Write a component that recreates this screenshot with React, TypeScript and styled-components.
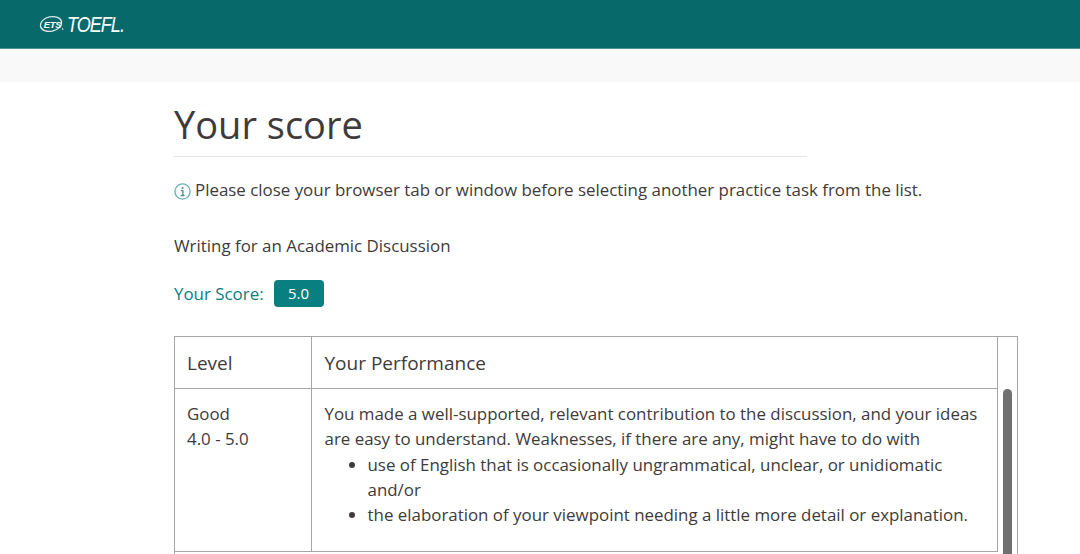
import styled, { createGlobalStyle } from "styled-components";

const GlobalStyle = createGlobalStyle`
  html, body {
    margin: 0;
    background: #fff;
    overflow: hidden;
  }
  body {
    font-family: "Open Sans", "Liberation Sans", sans-serif;
    color: #403b3b;
  }
`;

const Page = styled.div`
  height: 554px;
  overflow: hidden;
`;

const Header = styled.header`
  height: 48px;
  box-sizing: content-box;
  background: #08696b;
  border-bottom: 1px solid #4d9496;
  display: flex;
  align-items: center;
  padding-left: 39px;
  gap: 3px;
`;

const Wordmark = styled.span`
  font-family: "Liberation Sans", sans-serif;
  font-style: italic;
  font-size: 22px;
  letter-spacing: -1.2px;
  color: #fff;
  transform: scaleX(0.82);
  transform-origin: left center;
  position: relative;
  top: 0.5px;
`;

const Band = styled.div`
  height: 33px;
  background: #f9f9f9;
`;

const Main = styled.main`
  padding: 0 62px 0 174px;
`;

const Title = styled.h1`
  margin: 0;
  width: 633px;
  height: 75px;
  box-sizing: border-box;
  padding-top: 15px;
  border-bottom: 1px solid #e5e5e5;
  font-size: 38px;
  line-height: 55px;
  font-weight: 400;
  color: #403b3b;
`;

const Notice = styled.p`
  margin: 21px 0 0;
  display: flex;
  align-items: center;
  gap: 4px;
  font-size: 16.9px;
  line-height: 23px;
`;

const InfoSvg = styled.svg`
  width: 17px;
  height: 17px;
  margin-top: 4px;
  flex: none;
`;

const TaskName = styled.p`
  margin: 33px 0 0;
  font-size: 16.9px;
  line-height: 23px;
`;

const ScoreRow = styled.div`
  margin-top: 23px;
  display: flex;
  align-items: center;
  gap: 10px;
  font-size: 16.9px;
  line-height: 27px;
  color: #0a7f82;
`;

const ScoreBadge = styled.span`
  width: 50px;
  height: 27px;
  border-radius: 4px;
  background: #0a7f82;
  color: #fff;
  font-size: 15px;
  text-align: center;
`;

const TableFrame = styled.div`
  position: relative;
  margin-top: 29px;
  width: 844px;
  height: 300px;
  box-sizing: border-box;
  border: 1px solid #a6a6a6;
  border-bottom: 0;
`;

const Scrollbar = styled.div`
  position: absolute;
  top: 52px;
  right: 5px;
  width: 9px;
  height: 240px;
  border-radius: 5px;
  background: #707070;
`;

const Table = styled.table`
  border-collapse: collapse;
  table-layout: fixed;
  width: 822px;
`;

const HeadCell = styled.th<{ $width: number }>`
  width: ${(p) => p.$width}px;
  height: 51px;
  box-sizing: border-box;
  padding: 1px 13px 0;
  border-right: 1px solid #a6a6a6;
  border-bottom: 1px solid #a6a6a6;
  font-size: 19px;
  font-weight: 400;
  text-align: left;

  &:first-child {
    padding-left: 12px;
  }
`;

const Cell = styled.td`
  height: 163px;
  box-sizing: border-box;
  padding: 12.5px 13px 0;
  border-right: 1px solid #a6a6a6;
  border-bottom: 1px solid #a6a6a6;
  vertical-align: top;
  font-size: 16.9px;
  line-height: 25.3px;

  &:first-child {
    padding-left: 12px;
  }
`;

const Bullets = styled.ul`
  margin: 0;
  padding-left: 43px;
`;

function EtsMark() {
  return (
    <svg width="25" height="18" viewBox="0 0 25 18" aria-hidden="true">
      <ellipse cx="12" cy="9" rx="10.8" ry="7.2" fill="none" stroke="#d8e8e8" strokeWidth="1.3" transform="rotate(-12 12 9)" />
      <text x="4.8" y="12.8" fontFamily="Liberation Sans, sans-serif" fontStyle="italic" fontWeight="700" fontSize="9.5" letterSpacing="-0.4" fill="#fff">
        ETS
      </text>
      <circle cx="23.6" cy="14" r="0.8" fill="#fff" />
    </svg>
  );
}

function InfoIcon() {
  return (
    <InfoSvg viewBox="0 0 17 17" aria-hidden="true">
      <circle cx="8.5" cy="8.5" r="7.6" fill="none" stroke="#6fb2b5" strokeWidth="1.4" />
      <circle cx="8.5" cy="5" r="1.1" fill="#3f9295" />
      <path d="M6.9 7.6h2v4.8M6.7 12.5h3.8" fill="none" stroke="#3f9295" strokeWidth="1.3" />
    </InfoSvg>
  );
}

export default function App() {
  return (
    <Page>
      <GlobalStyle />
      <Header>
        <EtsMark />
        <Wordmark>TOEFL.</Wordmark>
      </Header>
      <Band />
      <Main>
        <Title>Your score</Title>
        <Notice>
          <InfoIcon />
          Please close your browser tab or window before selecting another practice task from the list.
        </Notice>
        <TaskName>Writing for an Academic Discussion</TaskName>
        <ScoreRow>
          Your Score:
          <ScoreBadge>5.0</ScoreBadge>
        </ScoreRow>
        <TableFrame>
          <Table>
            <thead>
              <tr>
                <HeadCell $width={136}>Level</HeadCell>
                <HeadCell $width={686}>Your Performance</HeadCell>
              </tr>
            </thead>
            <tbody>
              <tr>
                <Cell>
                  Good
                  <br />
                  4.0 - 5.0
                </Cell>
                <Cell>
                  You made a well-supported, relevant contribution to the discussion, and your ideas are easy to
                  understand. Weaknesses, if there are any, might have to do with
                  <Bullets>
                    <li>use of English that is occasionally ungrammatical, unclear, or unidiomatic and/or</li>
                    <li>the elaboration of your viewpoint needing a little more detail or explanation.</li>
                  </Bullets>
                </Cell>
              </tr>
            </tbody>
          </Table>
          <Scrollbar />
        </TableFrame>
      </Main>
    </Page>
  );
}
